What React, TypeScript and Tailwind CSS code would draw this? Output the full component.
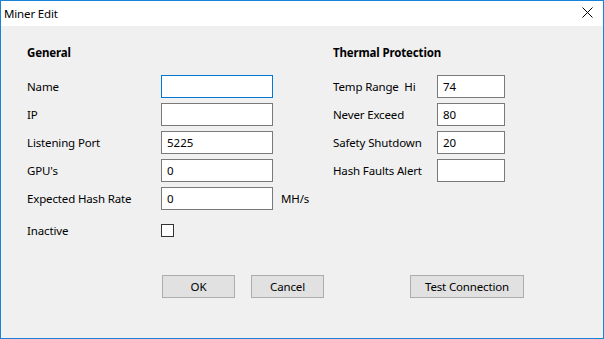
import React from "react";

const font = { fontFamily: '"Noto Sans", "Open Sans", sans-serif' };

function Field({ label, value = "", focused = false, suffix }: { label: string; value?: string; focused?: boolean; suffix?: string }) {
  return (
    <div className="flex h-[23px] items-center">
      <div className="w-[134px] text-[11.5px] tracking-[-0.15px] text-black">{label}</div>
      <div
        className={
          focused
            ? "flex h-[23px] w-[112px] items-center border border-[#0078d7] bg-white pl-[5px] text-[11.5px] text-black"
            : "flex h-[23px] w-[112px] items-center border border-[#7a7a7a] bg-white pl-[5px] text-[11.5px] text-black"
        }
      >
        {value}
      </div>
      {suffix && <div className="ml-[8px] text-[11.5px] tracking-[-0.15px] text-black">{suffix}</div>}
    </div>
  );
}

function RField({ label, value = "" }: { label: string; value?: string }) {
  return (
    <div className="flex h-[23px] items-center">
      <div className="w-[104px] whitespace-pre text-[11.5px] tracking-[-0.15px] text-black">{label}</div>
      <div className="flex h-[23px] w-[68px] items-center border border-[#7a7a7a] bg-white pl-[5px] text-[11.5px] text-black">
        {value}
      </div>
    </div>
  );
}

export default function App() {
  return (
    <div className="flex h-[339px] w-[604px] flex-col border border-[#1883d7] bg-[#f0f0f0] leading-[16px]" style={font}>
      <div className="flex h-[25px] shrink-0 items-center justify-between bg-white pl-[3px] pr-[10px]">
        <span className="text-[11.5px] tracking-[-0.15px] text-black">Miner Edit</span>
        <svg width="11" height="11" viewBox="0 0 11 11" className="mb-[2px]">
          <path d="M0.5 0.5 L10.5 10.5 M10.5 0.5 L0.5 10.5" stroke="#000" strokeWidth="1" fill="none" />
        </svg>
      </div>
      <div className="flex flex-col pl-[26px] pt-[19px]">
        <div className="flex">
          <div className="flex w-[306px] flex-col">
            <div className="mb-[14px] text-[11.5px] font-bold tracking-[-0.15px] text-black">General</div>
            <div className="flex flex-col gap-[5px]">
              <Field label="Name" focused />
              <Field label="IP" />
              <Field label="Listening Port" value="5225" />
              <Field label="GPU's" value="0" />
              <Field label="Expected Hash Rate" value="0" suffix="MH/s" />
            </div>
            <div className="mt-[14px] flex h-[13px] items-center">
              <div className="w-[134px] text-[11.5px] tracking-[-0.15px] text-black">Inactive</div>
              <div className="h-[13px] w-[13px] border border-[#333] bg-white" />
            </div>
          </div>
          <div className="flex flex-col">
            <div className="mb-[14px] text-[11.5px] font-bold tracking-[-0.15px] text-black">Thermal Protection</div>
            <div className="flex flex-col gap-[5px]">
              <RField label="Temp Range  Hi" value="74" />
              <RField label="Never Exceed" value="80" />
              <RField label="Safety Shutdown" value="20" />
              <RField label="Hash Faults Alert" />
            </div>
          </div>
        </div>
        <div className="mt-[38px] flex">
          <button className="ml-[135px] h-[23px] w-[73px] border border-[#adadad] bg-[#e1e1e1] text-[11.5px] tracking-[-0.15px] text-black">OK</button>
          <button className="ml-[16px] h-[23px] w-[73px] border border-[#adadad] bg-[#e1e1e1] text-[11.5px] tracking-[-0.15px] text-black">Cancel</button>
          <button className="ml-[86px] h-[23px] w-[114px] border border-[#adadad] bg-[#e1e1e1] text-[11.5px] tracking-[-0.15px] text-black">Test Connection</button>
        </div>
      </div>
    </div>
  );
}
